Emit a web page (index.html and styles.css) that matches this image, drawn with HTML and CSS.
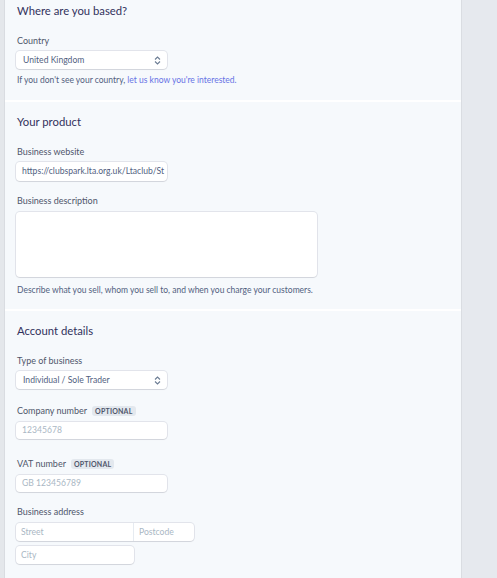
FILE: index.html
```
<!DOCTYPE html>
<html lang="en">
<head>
  <meta charset="UTF-8">
  <title>Account application</title>
  <link rel="stylesheet" href="styles.css">
</head>
<body>
  <div class="page">
    <div class="side-left"></div>
    <main class="panel">
      <section class="block first">
        <h2>Where are you based?</h2>
        <label class="label">Country</label>
        <div class="select">
          <span>United Kingdom</span>
          <svg class="chev" width="7" height="9" viewBox="0 0 7 9"><path d="M1 3.5 L3.5 1 L6 3.5 M1 5.5 L3.5 8 L6 5.5" fill="none" stroke="#6b7c93" stroke-width="1.1"/></svg>
        </div>
        <p class="help">If you don't see your country, <a href="#">let us know you're interested.</a></p>
      </section>

      <section class="block">
        <h2>Your product</h2>
        <label class="label">Business website</label>
        <div class="input filled">https://clubspark.lta.org.uk/Ltaclub/St</div>
        <label class="label">Business description</label>
        <div class="textarea"></div>
        <p class="help wide">Describe what you sell, whom you sell to, and when you charge your customers.</p>
      </section>

      <section class="block">
        <h2>Account details</h2>
        <label class="label">Type of business</label>
        <div class="select">
          <span>Individual / Sole Trader</span>
          <svg class="chev" width="7" height="9" viewBox="0 0 7 9"><path d="M1 3.5 L3.5 1 L6 3.5 M1 5.5 L3.5 8 L6 5.5" fill="none" stroke="#6b7c93" stroke-width="1.1"/></svg>
        </div>
        <label class="label opt">Company number <span class="badge">Optional</span></label>
        <div class="input short">12345678</div>
        <label class="label opt vat">VAT number <span class="badge">Optional</span></label>
        <div class="input short">GB 123456789</div>
        <label class="label">Business address</label>
        <div class="address">
          <div class="addr-row">
            <div class="cell street">Street</div>
            <div class="cell postcode">Postcode</div>
          </div>
          <div class="cell city">City</div>
        </div>
      </section>
    </main>
    <div class="side-right"></div>
  </div>
</body>
</html>
```

FILE: styles.css
```
body {
  margin: 0;
  font-family: Lato, 'Open Sans', sans-serif;
  background: #e6e9ee;
}
.page {
  display: flex;
  height: 578px;
  overflow: hidden;
}
.side-left {
  width: 4px;
  background: #e4e7eb;
  border-right: 1px solid #d9dce1;
}
.panel {
  width: 456px;
  background: #f6f9fc;
}
.side-right {
  flex: 1;
  background: #e6e9ee;
  border-left: 1px solid #dadde2;
}
.block {
  padding: 12px 16px 14px 12px;
  border-bottom: 2px solid #ffffff;
  display: flex;
  flex-direction: column;
  align-items: flex-start;
}
.block.first {
  padding-top: 3px;
}
.block:last-child {
  border-bottom: none;
}
h2 {
  margin: 0 0 16px;
  font-size: 11.3px;
  line-height: 16px;
  font-weight: 400;
  color: #32325d;
}
.label {
  font-size: 9px;
  line-height: 12px;
  color: #4f566b;
  margin-bottom: 4px;
  display: flex;
  align-items: center;
  gap: 5px;
}
.label.opt {
  margin-top: 2px;
  margin-bottom: 5px;
}
.label.vat {
  margin-top: 5px;
}
.badge {
  font-size: 7px;
  line-height: 10px;
  font-weight: 700;
  text-transform: uppercase;
  color: #4f566b;
  background: #e3e8ee;
  padding: 0 3px;
  border-radius: 3px;
  letter-spacing: 0.2px;
}
.select, .input, .textarea {
  margin-left: -1px;
  background: #ffffff;
  border-radius: 4px;
  box-shadow: 0 0 0 1px rgba(50, 50, 93, 0.1), 0 1px 1px rgba(0, 0, 0, 0.07);
  box-sizing: border-box;
  margin-bottom: 14px;
}
.select {
  width: 151px;
  height: 18px;
  display: flex;
  align-items: center;
  justify-content: space-between;
  padding: 0 6px 0 7px;
  font-size: 8.6px;
  color: #525f7f;
}
.chev {
  display: block;
}
.input {
  width: 151px;
  height: 19px;
  padding: 0 6px;
  font-size: 8.6px;
  line-height: 19px;
  color: #aab7c4;
  white-space: nowrap;
  overflow: hidden;
}
.input.filled {
  color: #525f7f;
}
.input.short {
  height: 17px;
  line-height: 17px;
}
.textarea {
  width: 301px;
  height: 65px;
  margin-top: 1px;
  margin-bottom: 7px;
}
.select + .help {
  margin-top: -9px;
}
.help {
  margin: 0;
  font-size: 8.5px;
  line-height: 12px;
  color: #525f7f;
}
.help.wide {
  margin-bottom: -1px;
}
.help a {
  color: #6772e5;
  text-decoration: none;
}
.address {
  margin-left: -1px;
  margin-top: 1px;
  display: flex;
  flex-direction: column;
  gap: 5px;
}
.addr-row {
  display: flex;
  background: #ffffff;
  border-radius: 4px;
  box-shadow: 0 0 0 1px rgba(50, 50, 93, 0.1), 0 1px 1px rgba(0, 0, 0, 0.07);
  width: 178px;
}
.cell {
  height: 18px;
  line-height: 18px;
  font-size: 8.6px;
  color: #aab7c4;
  padding: 0 5px;
  box-sizing: border-box;
}
.street {
  width: 118px;
  border-right: 1px solid #e6ebf1;
}
.postcode {
  flex: 1;
}
.city {
  width: 118px;
  background: #ffffff;
  border-radius: 4px;
  box-shadow: 0 0 0 1px rgba(50, 50, 93, 0.1), 0 1px 1px rgba(0, 0, 0, 0.07);
}
```
